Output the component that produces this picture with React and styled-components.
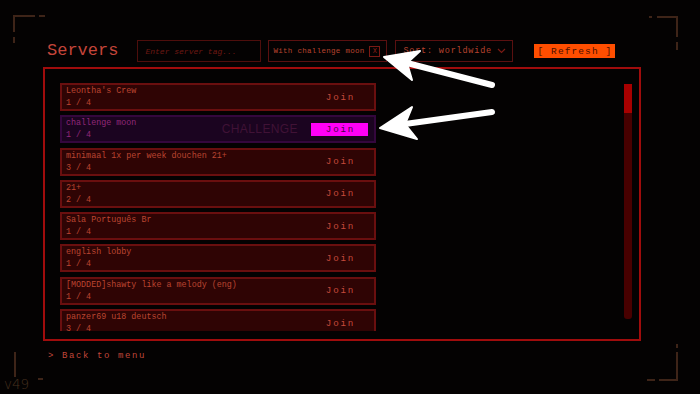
import React from "react";
import styled, { createGlobalStyle } from "styled-components";

const servers = [
  { name: "Leontha's Crew", count: "1 / 4" },
  { name: "challenge moon", count: "1 / 4", challenge: true },
  { name: "minimaal 1x per week douchen 21+", count: "3 / 4" },
  { name: "21+", count: "2 / 4" },
  { name: "Sala Português Br", count: "1 / 4" },
  { name: "english lobby", count: "1 / 4" },
  { name: "[MODDED]shawty like a melody (eng)", count: "1 / 4" },
  { name: "panzer69 u18 deutsch", count: "3 / 4" },
];

const GlobalStyle = createGlobalStyle`
  html, body {
    margin: 0;
    background: #040202;
  }
  * {
    box-sizing: border-box;
  }
`;

const Screen = styled.div`
  position: relative;
  width: 700px;
  height: 394px;
  overflow: hidden;
  background: #040202;
  padding: 40px 0 0 43px;
  font-family: "Liberation Mono", "DejaVu Sans Mono", monospace;
`;

const Header = styled.div`
  display: flex;
  align-items: center;
  height: 22px;
  padding-left: 4px;
`;

const Title = styled.h1`
  margin: 0 19px 0 0;
  font-size: 17px;
  font-weight: 400;
  line-height: 22px;
  color: #c4453a;
`;

const Field = styled.div`
  display: flex;
  align-items: center;
  width: ${(p) => p.$width}px;
  height: 22px;
  margin-right: ${(p) => p.$gap || 0}px;
  padding-left: ${(p) => p.$pad || 6}px;
  border: 1px solid ${(p) => p.$border || "#4e0e0c"};
  font-size: ${(p) => p.$size || 8}px;
  letter-spacing: ${(p) => p.$spacing || 0}px;
  color: #b8422f;
  white-space: nowrap;
`;

const Placeholder = styled.span`
  font-style: italic;
  color: #6e1812;
`;

const ClearBox = styled.span`
  display: flex;
  align-items: center;
  justify-content: center;
  width: 11px;
  height: 11px;
  margin: 0 6px 0 auto;
  border: 1px solid #7a1a14;
  font-size: 7px;
  letter-spacing: 0;
  color: #8a1e16;
`;

const Chevron = styled.svg`
  margin: 0 6px 0 auto;
`;

const RefreshButton = styled.div`
  display: flex;
  align-items: center;
  justify-content: center;
  width: 81px;
  height: 14px;
  margin-left: 21px;
  background: #ff4e00;
  color: #4a0e00;
  font-size: 9.5px;
  letter-spacing: 1.1px;
  white-space: pre;
`;

const Panel = styled.div`
  display: flex;
  width: 598px;
  height: 274px;
  margin-top: 5px;
  padding: 14px 7px 8px 15px;
  border: 2px solid #a00c0c;
`;

const List = styled.div`
  display: flex;
  flex-direction: column;
  gap: 4.3px;
  width: 316px;
  height: 248px;
  overflow: hidden;
`;

const Row = styled.div`
  display: flex;
  align-items: center;
  flex-shrink: 0;
  height: 28px;
  padding: 0 6px 0 4px;
  background: ${(p) => (p.$challenge ? "#1b0420" : "#2f0404")};
  border: 2px solid ${(p) => (p.$challenge ? "#34073d" : "#6a0f0f")};
`;

const Info = styled.div`
  display: flex;
  flex-direction: column;
  flex: 1;
  font-size: 8.4px;
  line-height: 12px;
  color: ${(p) => (p.$challenge ? "#92287a" : "#bb4431")};
  white-space: nowrap;
`;

const ChallengeTag = styled.span`
  margin-right: 13px;
  font-family: "Liberation Sans", Arial, sans-serif;
  font-size: 12px;
  letter-spacing: 0.4px;
  color: #401236;
`;

const JoinButton = styled.div`
  display: flex;
  align-items: center;
  justify-content: center;
  width: 57px;
  height: 13px;
  padding-left: 2px;
  font-size: 9.2px;
  letter-spacing: 1.8px;
  background: ${(p) => (p.$active ? "#ff00f6" : "transparent")};
  color: ${(p) => (p.$active ? "#4a0048" : "#c64a3c")};
`;

const Track = styled.div`
  width: 8px;
  height: 235px;
  margin: 1px 0 0 auto;
  background: #480000;
  border-radius: 0 0 3px 3px;
`;

const Thumb = styled.div`
  width: 8px;
  height: 29px;
  background: #a80000;
`;

const BackLink = styled.div`
  margin-top: 10px;
  padding-left: 5px;
  font-size: 9px;
  letter-spacing: 1.6px;
  color: #c0463a;
  white-space: pre;
`;

const Version = styled.div`
  position: absolute;
  left: 4px;
  top: 376px;
  font-family: "DejaVu Sans", sans-serif;
  font-size: 13.5px;
  font-weight: 200;
  color: #46301f;
`;

const Overlay = styled.svg`
  position: absolute;
  left: 0;
  top: 0;
  pointer-events: none;
`;

const Frame = () => (
  <Overlay width="700" height="394" viewBox="0 0 700 394">
    <g stroke="#3e2418" strokeWidth="2" fill="none">
      <path d="M14 43 V37 M14 32 V16 H35 M39 16 H45" />
      <path d="M649 17 H652 M657 17 H677 V37 M677 42 V50" />
      <path d="M15 352 V377 M38 379 H43" />
      <path d="M647 380 H655 M659 380 H677 V352 M677 348 V344" />
    </g>
    <g fill="#ffffff" stroke="#ffffff" strokeLinecap="round">
      <line x1="407" y1="63" x2="492" y2="85" strokeWidth="6" />
      <polygon points="384,57 420,51 407,63 412,80" strokeWidth="2" strokeLinejoin="round" />
      <line x1="405" y1="124" x2="492" y2="112" strokeWidth="6" />
      <polygon points="380,128 412,107 405,124 417,139" strokeWidth="2" strokeLinejoin="round" />
    </g>
  </Overlay>
);

export default function App() {
  return (
    <>
      <GlobalStyle />
      <Screen>
        <Header>
          <Title>Servers</Title>
          <Field $width={124} $gap={7} $pad={7}>
            <Placeholder>Enter server tag...</Placeholder>
          </Field>
          <Field $width={119} $gap={8} $pad={4} $size={7.5} $spacing={0.3} $border="#5a1010">
            With challenge moon
            <ClearBox>X</ClearBox>
          </Field>
          <Field $width={118} $pad={7} $size={8.5} $spacing={0.8} $border="#5a1010">
            Sort: worldwide
            <Chevron width="9" height="6" viewBox="0 0 9 6">
              <path d="M1 1 L4.5 4.5 L8 1" stroke="#7a1a14" strokeWidth="1.2" fill="none" />
            </Chevron>
          </Field>
          <RefreshButton>[ Refresh ]</RefreshButton>
        </Header>
        <Panel>
          <List>
            {servers.map((s) => (
              <Row key={s.name} $challenge={s.challenge}>
                <Info $challenge={s.challenge}>
                  <span>{s.name}</span>
                  <span>{s.count}</span>
                </Info>
                {s.challenge && <ChallengeTag>CHALLENGE</ChallengeTag>}
                <JoinButton $active={s.challenge}>Join</JoinButton>
              </Row>
            ))}
          </List>
          <Track>
            <Thumb />
          </Track>
        </Panel>
        <BackLink>&gt; Back to menu</BackLink>
        <Version>v49</Version>
        <Frame />
      </Screen>
    </>
  );
}
